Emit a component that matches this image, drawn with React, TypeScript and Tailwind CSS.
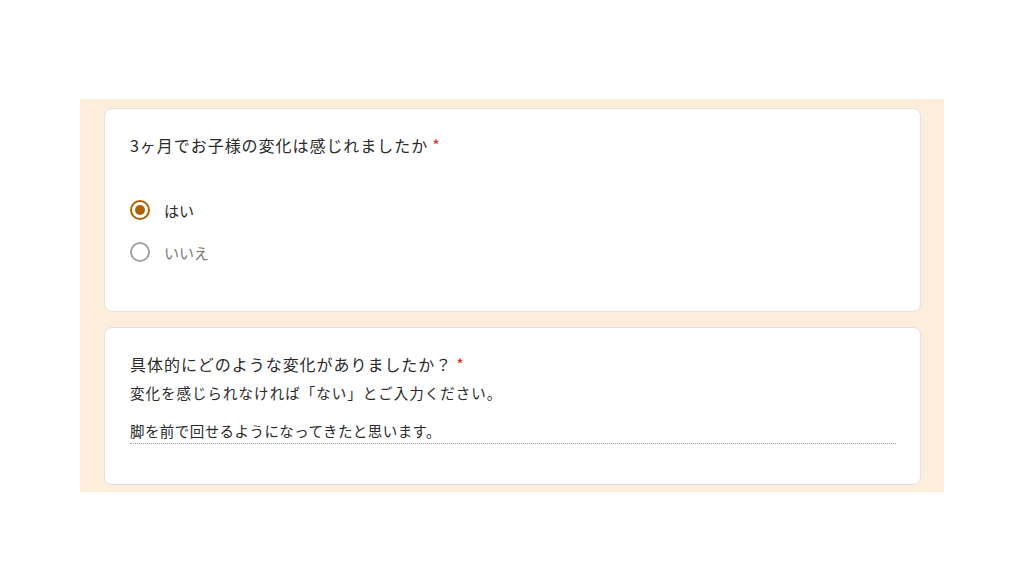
import React from "react";

type RadioProps = {
  label: string;
  checked?: boolean;
};

const Radio: React.FC<RadioProps> = ({label, checked}: RadioProps) => {
  return (
    <div className="flex items-center h-[42px]">
      {checked ? (
        <div className="w-5 h-5 rounded-full border-2 border-[#b06000] flex items-center justify-center">
          <div className="w-[10px] h-[10px] rounded-full bg-[#b06000]"/>
        </div>
      ) : (
        <div className="w-5 h-5 rounded-full border-2 border-[#a4a4a4]"/>
      )}
      <span className={`ml-[14px] text-[15px] leading-none ${checked ? "text-[#2a2a2a]" : "text-[#7a7a7a]"}`}>
        {label}
      </span>
    </div>
  );
};

const Star = () => <span className="text-[#d93025] ml-[4px]">*</span>;

export default function App() {
  return (
    <div
      className="w-[1024px] h-[576px] bg-white pt-[99px] pl-[80px]"
      style={{fontFamily: '"Noto Sans CJK JP", "Noto Sans", sans-serif'}}
    >
      <div className="w-[864px] h-[393px] bg-[#fdeedb] pt-[9px] pl-[24px] flex flex-col gap-[15px]">
        <section className="w-[817px] h-[204px] bg-white rounded-[8px] border border-[#e2e2e2] pt-[24px] px-[25px]">
          <div className="h-6 flex items-center text-[16px] tracking-[0.06em] text-[#2a2a2a]">
            3ヶ月でお子様の変化は感じれましたか<Star/>
          </div>
          <div className="mt-[32px]">
            <Radio label="はい" checked/>
            <Radio label="いいえ"/>
          </div>
        </section>

        <section className="w-[817px] h-[158px] bg-white rounded-[8px] border border-[#e2e2e2] pt-[24px] px-[25px]">
          <div className="h-6 flex items-center text-[16px] tracking-[0.06em] text-[#2a2a2a]">
            具体的にどのような変化がありましたか？<Star/>
          </div>
          <div className="mt-[5px] h-6 flex items-center text-[14.5px] tracking-[0.07em] text-[#2a2a2a]">
            変化を感じられなければ「ない」とご入力ください。
          </div>
          <div className="mt-[15px] w-[766px] border-b border-dotted border-[#9a9a9a] pb-[1px] text-[14.5px] tracking-[0.03em] text-[#2a2a2a]">
            脚を前で回せるようになってきたと思います。
          </div>
        </section>
      </div>
    </div>
  );
}
